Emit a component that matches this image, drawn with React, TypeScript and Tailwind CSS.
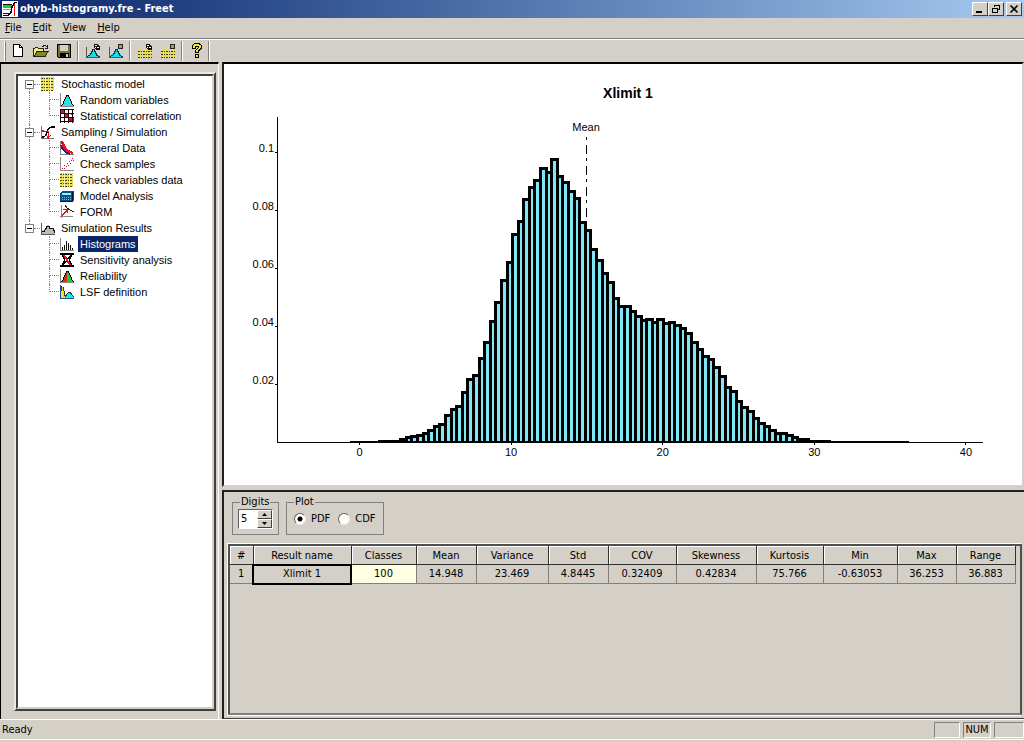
import React, { useState } from 'react';

type IconProps = { children: React.ReactNode };

const Icon16: React.FC<IconProps> = ({ children }) => (
  <svg width="16" height="16" viewBox="0 0 16 16" className="shrink-0" shapeRendering="crispEdges" fill="none">
    {children}
  </svg>
);

const GridIcon = () => (
  <Icon16>
    <rect x="1" y="1" width="13" height="14" fill="#e8e04c" />
    <path d="M1 2.5h13M1 5.5h13M1 8.5h13M1 11.5h13M1 14.5h13" stroke="#4a4712" strokeDasharray="2 1 1 1" />
    <path d="M5.500 1v14M10.500 1v14" stroke="#f8f4b0" />
  </Icon16>
);

const BellIcon = ({ left = '#22e6e6', right = '#22e6e6' }) => (
  <Icon16>
    <path d="M1.5 1v14M1 14.5h14" stroke="#888" />
    <path d="M2 14v-1l2-1 1-3 2-4 1-1h1v10z" fill={left} />
    <path d="M8 4h1l2 2 1 3 1 3 2 1v1H8z" fill={right} />
    <path d="M2 13h1v-1h1V9h1V7h1V5h1V3h3v2h1v2h1v2h1v3h1v1h1v1h-1v-1h-1v-1h-1v-3h-1V7h-1V5H9V4H8v1H7v2H6v2H5v3H4v1H3v1H2z" fill="#000" />
  </Icon16>
);

const CorrelationIcon = () => (
  <Icon16>
    <rect x="1" y="1" width="14" height="14" fill="#fff" />
    <path d="M1 1h4v4H1zM5 5h5v5H5zM9 9h6v5H9zM12 5h2v2h-2z" fill="#d0102c" />
    <path d="M1 1.5h14M1 5.5h14M1 9.5h14M1 13.5h14M1.5 1v14M5.5 1v14M9.5 1v14M13.5 1v14" stroke="#1c0004" />
  </Icon16>
);

const SamplingIcon = () => (
  <Icon16>
    <path d="M1.5 2v13M1 14.5h13" stroke="#777" />
    <path d="M2 13h2l2-2 1-3 1-3 3-2h4" stroke="#000" strokeWidth="1.3" />
    <path d="M2 7.5h6.5V14M6 11l2.5 3 2-3M4 6l-2 1.5" stroke="#e01010" />
  </Icon16>
);

const GeneralIcon = () => (
  <Icon16>
    <path d="M1.5 1v13M1 14.5h14" stroke="#888" />
    <path d="M2 1l3 1c1 5 3 8 9 10v2c-7-1-10-4-11-8z" fill="#e8101c" />
    <path d="M2 5c1 5 4 8 9 9" stroke="#1616b0" strokeWidth="1.4" />
  </Icon16>
);

const SamplesIcon = () => (
  <Icon16>
    <path d="M1.5 1v13M1 14.5h14" stroke="#888" />
    <path d="M3 12h1v1H3zM5 12h1v1H5zM5 9h1v1H5zM7 10h1v1H7zM8 7h1v1H8zM9 9h1v1H9zM10 5h1v1h-1zM11 7h1v1h-1zM12 4h1v1h-1zM13 2h1v1h-1zM14 4h1v1h-1z" fill="#d01018" />
  </Icon16>
);

const ModelIcon = () => (
  <Icon16>
    <path d="M3 3h12v9l-2 2H1V5z" fill="#0b4f86" />
    <path d="M3 5h9v2H3z" fill="#8ff0f0" />
    <path d="M3 9.5h9M3 11.5h9" stroke="#5cc4dc" strokeDasharray="1 1" />
    <path d="M13.5 4v9M1 13.5h13" stroke="#00182c" />
  </Icon16>
);

const FormIcon = () => (
  <Icon16>
    <path d="M2.5 1v13M1 12.5h13" stroke="#888" />
    <path d="M6 1l2 3 3 2 4 2" stroke="#222" />
    <path d="M3 12l5-6M4 5.5h5M8.5 5v4" stroke="#e01010" strokeWidth="1.2" />
  </Icon16>
);

const ResultsIcon = () => (
  <Icon16>
    <path d="M2 14v-3l3-2 2-4h2l1 3 3 1 2 3v2z" fill="#bbb" />
    <path d="M2 11.5h2l2-3 1-2h2l1 2h3l1 2 1 2" stroke="#111" strokeWidth="1.3" />
    <path d="M1.5 3v12M1 14.5h14" stroke="#555" />
  </Icon16>
);

const HistogramIcon = () => (
  <Icon16>
    <path d="M1.5 2v13M1 14.5h14" stroke="#888" />
    <path d="M3.5 11v3M5.5 9v5M7.5 5v9M9.5 7v7M11.5 9v5M13.5 12v2" stroke="#111" />
  </Icon16>
);

const SensitivityIcon = () => (
  <Icon16>
    <path d="M1 2h14M1 14h14" stroke="#000" strokeWidth="2" />
    <path d="M3 3l3 5-3 5M13 3l-3 5 3 5M12 3L4 13" stroke="#000" strokeWidth="1.3" />
    <path d="M5 3l6 10" stroke="#e01028" strokeWidth="2" />
  </Icon16>
);

const LsfIcon = () => (
  <Icon16>
    <path d="M2 14V4l1-2 2 5 2 7z" fill="#f4e11a" />
    <path d="M6 14l3-5 2-1 2 2 2 4z" fill="#22e6e6" />
    <path d="M2.500 7V2M4.500 3v4M5.500 7v5M6 13l3-4 2-1 2 3 2 2" stroke="#333" />
    <path d="M1.5 1v13M1 14.5h14" stroke="#1754a6" />
  </Icon16>
);

// small marker in the corner of the add and remove tools
const Marker = ({ square = false }) =>
  square ? (
    <path d="M10.5 1.5h4v4h-4z" fill="#a8a43c" stroke="#222" />
  ) : (
    <>
      <path d="M9 1h4v1h1v1h1v4h-4V6h-1V5H9z" fill="#111" />
      <path d="M10 2h2v1h-2zM12 4h2v1h-2zM10 4h1v1h-1z" fill="#fff" />
    </>
  );

const BellTool = ({ square = false }) => (
  <Icon16>
    <path d="M1.5 4v11M1 14.5h14" stroke="#555" />
    <path d="M2 14v-1l2-1 2-3 1-2h3l1 2 2 3 2 1v1z" fill="#1fd8e8" />
    <path d="M2 13h1v-1h2v-2h1V8h1V6h3v2h1v2h1v2h1v1h2v1h-2v-1h-2v-2h-1V9h-1V7H8v2H7v2H6v1H5v1H3v1H2z" fill="#053a44" />
    <Marker square={square} />
  </Icon16>
);

const GridTool = ({ square = false }) => (
  <Icon16>
    <path d="M1 6h4v9H1zM6 6h4v9H6zM11 7h4v8h-4z" fill="#e9df4c" />
    <path d="M1 8.5h4M1 11.5h4M1 14.5h4M6 8.5h4M6 11.5h4M6 14.5h4M11 8.5h4M11 11.5h4M11 14.5h4" stroke="#3d3a10" strokeDasharray="2 1" />
    <Marker square={square} />
  </Icon16>
);

const NewIcon = () => (
  <Icon16>
    <path d="M3.5 1.5h6l3 3v9h-9z" fill="#fff" stroke="#000" />
    <path d="M9.5 1.5v3h3" stroke="#000" />
  </Icon16>
);

const OpenIcon = () => (
  <Icon16>
    <path d="M.5 13.5v-8h1l1-1h2l1 1h5v3h4l-3 5z" fill="#f4ee72" stroke="#222" />
    <path d="M1 13.5l3-5h11l-3 5z" fill="#8a8420" stroke="#222" />
    <path d="M9.5 3.5l2-1h1l2 2M14.5 2v3H12" stroke="#222" />
  </Icon16>
);

const SaveIcon = () => (
  <Icon16>
    <path d="M1.5 1.5h13v13h-12l-1-1z" fill="#77742a" stroke="#000" />
    <path d="M4 2h8v6H4z" fill="#d4d0c8" />
    <path d="M4 10h9v4H4z" fill="#000" />
    <path d="M10 11h2v3h-2z" fill="#d4d0c8" />
  </Icon16>
);

const HelpIcon = () => (
  <Icon16>
    <path d="M4 1h1V0h6v1h1v1h1v4h-1v1h-1v1h-1v2H6V7h1V6h1V5h1V4H7v2H3V2h1zM6 11h4v4H6z" fill="#000" />
    <path d="M5 1h5v1h2v3h-1v1h-1v1H9v2H7V7h1V6h1V5h1V3H6v2H4V2h1zM7 12h2v2H7z" fill="#f2e61c" />
  </Icon16>
);

const AppIcon = () => (
  <Icon16>
    <path d="M0 0h16v16H0z" fill="#fff" />
    <path d="M1 4h9v3H1z" fill="#10d030" />
    <path d="M1 3.5h9M1 12.5h6" stroke="#111" />
    <path d="M1 8.5h8" stroke="#999" />
    <path d="M15 1.5h-2l-3 4-1 6-3 3H1" stroke="#000" strokeWidth="1.4" />
    <path d="M12.5 3v12" stroke="#e01010" />
  </Icon16>
);

const tree = [
  {
    label: 'Stochastic model',
    icon: <GridIcon />,
    items: [
      { label: 'Random variables', icon: <BellIcon /> },
      { label: 'Statistical correlation', icon: <CorrelationIcon /> },
    ],
  },
  {
    label: 'Sampling / Simulation',
    icon: <SamplingIcon />,
    items: [
      { label: 'General Data', icon: <GeneralIcon /> },
      { label: 'Check samples', icon: <SamplesIcon /> },
      { label: 'Check variables data', icon: <GridIcon /> },
      { label: 'Model Analysis', icon: <ModelIcon /> },
      { label: 'FORM', icon: <FormIcon /> },
    ],
  },
  {
    label: 'Simulation Results',
    icon: <ResultsIcon />,
    items: [
      { label: 'Histograms', icon: <HistogramIcon /> },
      { label: 'Sensitivity analysis', icon: <SensitivityIcon /> },
      { label: 'Reliability', icon: <BellIcon left="#e02a18" right="#18d020" /> },
      { label: 'LSF definition', icon: <LsfIcon /> },
    ],
  },
];

const toolGroups = [
  [
    { label: 'New', icon: <NewIcon /> },
    { label: 'Open', icon: <OpenIcon /> },
    { label: 'Save', icon: <SaveIcon /> },
  ],
  [
    { label: 'New variable', icon: <BellTool /> },
    { label: 'Delete variable', icon: <BellTool square /> },
  ],
  [
    { label: 'New category', icon: <GridTool /> },
    { label: 'Delete category', icon: <GridTool square /> },
  ],
  [{ label: 'Help', icon: <HelpIcon /> }],
];

const columns = [
  { name: '#', value: '1', width: 23 },
  { name: 'Result name', value: 'Xlimit 1', width: 98 },
  { name: 'Classes', value: '100', width: 65 },
  { name: 'Mean', value: '14.948', width: 60 },
  { name: 'Variance', value: '23.469', width: 72 },
  { name: 'Std', value: '4.8445', width: 60 },
  { name: 'COV', value: '0.32409', width: 68 },
  { name: 'Skewness', value: '0.42834', width: 80 },
  { name: 'Kurtosis', value: '75.766', width: 67 },
  { name: 'Min', value: '-0.63053', width: 74 },
  { name: 'Max', value: '36.253', width: 59 },
  { name: 'Range', value: '36.883', width: 59 },
];

// bar heights in chart units, one per class
const heights = [
  0, 0, 0, 0, 0, 1, 1, 1, 1, 2, 4, 5, 6, 8, 11, 15, 17, 26, 32, 35, 49, 62, 66, 83, 99, 120, 139, 161, 179, 207,
  220, 242, 254, 261, 273, 269, 282, 265, 259, 250, 243, 219, 211, 192, 181, 168, 159, 143, 135, 135, 130, 125,
  121, 122, 119, 122, 118, 119, 116, 113, 108, 99, 92, 85, 82, 74, 65, 54, 50, 40, 34, 30, 23, 18, 15, 11, 8, 8,
  6, 4, 2, 2, 1, 1, 1, 1, 1, 0, 0, 0, 0, 0, 0, 0, 0, 0, 0, 0, 0, 0,
];

const BASE = 378;
const scaleX = (v: number) => 135.5 + v * 15.16;
const BAR = 0.36883 * 15.16;
const START = scaleX(-0.63053);

const Histogram = () => (
  <svg viewBox="0 0 798 421" className="block w-full h-full font-['Liberation_Sans',sans-serif] text-[11px]" role="img" aria-label="Histogram of Xlimit 1">
    <text x="404" y="34" textAnchor="middle" className="text-[14px] font-bold">Xlimit 1</text>
    <text x="362" y="67" textAnchor="middle">Mean</text>
    <path d="M362.5 73v90" stroke="#000" strokeDasharray="3 5 9 4" shapeRendering="crispEdges" />
    <g fill="#80e8f4" stroke="#000" strokeWidth="3" shapeRendering="crispEdges">
      {heights.map((h, i) =>
        h > 1 ? (
          <rect key={i} x={Math.round(START + i * BAR) + 0.5} y={BASE - h - 0.5} width={Math.round(START + (i + 1) * BAR) - Math.round(START + i * BAR)} height={h + 0.5} />
        ) : null,
      )}
    </g>
    {/* classes too small to show a body */}
    <path d={`M${START} 377.5H${START + 9 * BAR}M${START + 80 * BAR} 377.5H${START + 100 * BAR}`} stroke="#000" strokeWidth="2" shapeRendering="crispEdges" />
    <path d={`M${START + 5 * BAR} 377H${START + 9 * BAR}M${START + 80 * BAR} 377H${START + 86 * BAR}`} stroke="#000" strokeWidth="2" shapeRendering="crispEdges" />
    <path d="M0 379h798v6H0z" fill="#fff" />
    <path d="M53.5 53v325.5H759" stroke="#000" fill="none" shapeRendering="crispEdges" />
    {[0, 10, 20, 30, 40].map((v) => (
      <g key={v}>
        <path d={`M${Math.floor(scaleX(v)) + 0.5} 378v3`} stroke="#000" shapeRendering="crispEdges" />
        <text x={scaleX(v)} y="392" textAnchor="middle">{v}</text>
      </g>
    ))}
    {[0.02, 0.04, 0.06, 0.08, 0.1].map((v) => (
      <g key={v}>
        <path d={`M51 ${BASE - v * 2900 + 0.5}h3`} stroke="#000" shapeRendering="crispEdges" />
        <text x="50" y={BASE - v * 2900} textAnchor="end">{v}</text>
      </g>
    ))}
  </svg>
);

const captionButton =
  'w-4 h-[14px] flex items-center justify-center bg-[#d4d0c8] border border-t-white border-l-white border-r-[#404040] border-b-[#404040]';

const App: React.FC = () => {
  const [selected, setSelected] = useState('Histograms');
  const [plot, setPlot] = useState('PDF');
  const [digits, setDigits] = useState(5);

  return (
    <div className="h-screen flex flex-col overflow-hidden bg-[#d4d0c8] text-black text-[11px] leading-4 font-['DejaVu_Sans_Condensed','Noto_Sans',sans-serif]">
      {/* Title bar */}
      <header className="h-[18px] shrink-0 flex items-center gap-0.5 pl-0.5 pr-0.5 bg-linear-to-r from-[#0a246a] to-[#a6caf0] text-white">
        <AppIcon />
        <h1 className="grow font-bold">ohyb-histogramy.fre - Freet</h1>
        <div className="flex">
          <button className={captionButton} aria-label="Minimize">
            <svg width="10" height="10" shapeRendering="crispEdges"><path d="M1 7h6v2H1z" /></svg>
          </button>
          <button className={captionButton} aria-label="Restore">
            <svg width="10" height="10" shapeRendering="crispEdges" fill="none" stroke="#000">
              <path d="M3.5 3V1.5h5v4H7M3 1h6M1.5 4.5h5v4h-5zM1 4h6" />
            </svg>
          </button>
          <button className={`${captionButton} ml-0.5`} aria-label="Close">
            <svg width="10" height="10" stroke="#000" strokeWidth="1.6"><path d="M1.5 1.5l7 7M8.5 1.5l-7 7" /></svg>
          </button>
        </div>
      </header>

      {/* Menu */}
      <nav className="h-[21px] shrink-0 flex items-center gap-[11px] pl-[5px] border-b border-[#808080]">
        {['File', 'Edit', 'View', 'Help'].map((m) => (
          <button key={m}><span className="underline">{m[0]}</span>{m.slice(1)}</button>
        ))}
      </nav>

      {/* Toolbar */}
      <div className="h-[23px] shrink-0 flex items-center border-t border-white pl-1">
        <span className="w-0.5 h-5 border-l border-l-white border-r border-r-[#808080]" />
        {toolGroups.map((group, g) => (
          <div key={g} className="flex items-center">
            {g > 0 && <span className="mx-0.5 w-0.5 h-5 border-l border-[#808080] border-r border-r-white" />}
            {group.map((t) => (
              <button key={t.label} aria-label={t.label} className="w-[23px] h-5 flex items-center justify-center">
                {t.icon}
              </button>
            ))}
          </div>
        ))}
        <span className="w-0.5 h-5 border-l border-[#808080] border-r border-r-white" />
      </div>

      <main className="grow min-h-0 flex">
        {/* Tree */}
        <aside className="w-[219px] shrink-0 flex flex-col border-t-2 border-black border-l border-r border-r-white pl-[13px] pr-0.5 pt-2 pb-2">
          <div className="grow flex border-2 border-t-[#ece9e2] border-l-[#ece9e2] border-r-[#404040] border-b-[#404040]">
            <div className="grow bg-white border-2 border-t-[#404040] border-l-[#404040] border-r-[#d4d0c8] border-b-[#d4d0c8] font-['Liberation_Sans',sans-serif]">
              <ul>
                {tree.map((group, g) => (
                  <li key={group.label}>
                    <div className="flex h-4 items-center pl-[7px]">
                      <div className="w-[9px] h-4 flex flex-col items-center">
                        <span className={`grow w-px border-l border-dotted ${g > 0 ? 'border-[#808080]' : 'border-transparent'}`} />
                        <button className="w-[9px] h-[9px] border border-[#808080] bg-white flex items-center justify-center" aria-label={`Collapse ${group.label}`}>
                          <span className="w-[5px] h-px bg-black" />
                        </button>
                        <span className={`grow w-px border-l border-dotted ${g < 2 ? 'border-[#808080]' : 'border-transparent'}`} />
                      </div>
                      <span className="w-[6px] border-t border-dotted border-[#808080]" />
                      {group.icon}
                      <span className="pl-[5px] whitespace-nowrap">{group.label}</span>
                    </div>
                    <ul className={`ml-[11px] border-l border-dotted ${g < 2 ? 'border-[#808080]' : 'border-transparent'}`}>
                      {group.items.map((item, i) => (
                        <li key={item.label} className="flex h-4 items-center pl-[19px]">
                          <span className="w-[10px] h-4 flex flex-col">
                            <span className="h-2 border-l border-b border-dotted border-[#808080]" />
                            <span className={`h-2 border-l border-dotted ${i < group.items.length - 1 ? 'border-[#808080]' : 'border-transparent'}`} />
                          </span>
                          {item.icon}
                          <button
                            onClick={() => setSelected(item.label)}
                            className={`ml-[3px] h-4 px-0.5 whitespace-nowrap ${selected === item.label ? 'bg-[#0a246a] text-white' : ''}`}
                          >
                            {item.label}
                          </button>
                        </li>
                      ))}
                    </ul>
                  </li>
                ))}
              </ul>
            </div>
          </div>
        </aside>

        <div className="grow min-w-0 flex flex-col gap-[3px] pl-[3px]">
          {/* Chart */}
          <section className="grow min-h-0 bg-white border-2 border-t-black border-l-[#202020] border-r-[#d4d0c8] border-b-[#d4d0c8]">
            <Histogram />
          </section>

          {/* Results */}
          <section className="h-[229px] shrink-0 flex flex-col border-t-2 border-l-2 border-[#202020] border-b border-b-[#404040]">
            <div className="h-[51px] shrink-0 flex items-start gap-[7px] pl-2 pt-0.5">
              <fieldset className="w-[47px] h-[41px] border border-[#808080] px-[5px]">
                <legend className="ml-0.5 px-px h-4">Digits</legend>
                <div className="w-[35px] h-5 -mt-px flex border border-t-[#606060] border-l-[#606060] border-white bg-white">
                  <input
                    aria-label="Digits"
                    value={digits}
                    onChange={(e) => setDigits(Number(e.target.value) || 0)}
                    className="w-[18px] pl-0.5 outline-none"
                  />
                  <div className="grow flex flex-col">
                    <button onClick={() => setDigits(digits + 1)} aria-label="More digits" className="grow flex items-center justify-center bg-[#d4d0c8] border border-t-white border-l-white border-r-[#404040] border-b-[#404040]">
                      <svg width="5" height="3"><path d="M0 3l2.5-3L5 3z" /></svg>
                    </button>
                    <button onClick={() => setDigits(digits - 1)} aria-label="Fewer digits" className="grow flex items-center justify-center bg-[#d4d0c8] border border-t-white border-l-white border-r-[#404040] border-b-[#404040]">
                      <svg width="5" height="3"><path d="M0 0l2.5 3L5 0z" /></svg>
                    </button>
                  </div>
                </div>
              </fieldset>
              <fieldset className="w-[97px] h-[41px] border border-[#808080] px-[7px]">
                <legend className="px-px h-4">Plot</legend>
                <div className="flex gap-2 pt-px">
                  {['PDF', 'CDF'].map((p) => (
                    <label key={p} className="flex items-center gap-[5px]">
                      <input
                        type="radio"
                        name="plot"
                        checked={plot === p}
                        onChange={() => setPlot(p)}
                        className="appearance-none w-3 h-3 rounded-full bg-white border border-t-[#606060] border-l-[#606060] border-[#ece9e2] checked:bg-[radial-gradient(circle,#000_2px,#fff_3px)]"
                      />
                      {p}
                    </label>
                  ))}
                </div>
              </fieldset>
            </div>
            <div className="grow mx-[3px] mb-0.5 border border-white flex">
              <div className="grow border-2 border-t-[#505050] border-l-[#505050] border-r-[#505050] border-b-[#808080] pr-1">
                <table className="w-full table-fixed border-collapse text-center">
                  <colgroup>
                    {columns.map((c) => (
                      <col key={c.name} style={{ width: c.width }} />
                    ))}
                  </colgroup>
                  <thead>
                    <tr className="h-[18px]">
                      {columns.map((c) => (
                        <th key={c.name} className="p-0 pt-0.5 font-normal border-r border-b border-[#303030] shadow-[inset_1px_1px_0_#fff]">{c.name}</th>
                      ))}
                    </tr>
                  </thead>
                  <tbody>
                    <tr className="h-[19px]">
                      {columns.map((c) => (
                        <td
                          key={c.name}
                          className={`p-0 border-r border-b border-[#808080] ${c.name === 'Classes' ? 'bg-[#ffffe1]' : ''} ${c.name === 'Result name' ? 'outline-2 -outline-offset-1 outline-black' : ''}`}
                        >
                          {c.value}
                        </td>
                      ))}
                    </tr>
                  </tbody>
                </table>
              </div>
            </div>
          </section>
        </div>
      </main>

      {/* Status bar */}
      <footer className="h-[23px] shrink-0 flex items-start border-t border-white">
        <div className="grow h-5 flex items-center gap-[3px] border-b border-white pl-0.5">
          <span className="grow">Ready</span>
          <span className="w-[26px] h-4 border border-t-[#808080] border-l-[#808080] border-white" />
          <span className="w-7 h-4 leading-[14px] text-center border border-t-[#808080] border-l-[#808080] border-white">NUM</span>
          <span className="w-[30px] h-4 border border-t-[#808080] border-l-[#808080] border-white" />
        </div>
      </footer>
    </div>
  );
};

export default App;
